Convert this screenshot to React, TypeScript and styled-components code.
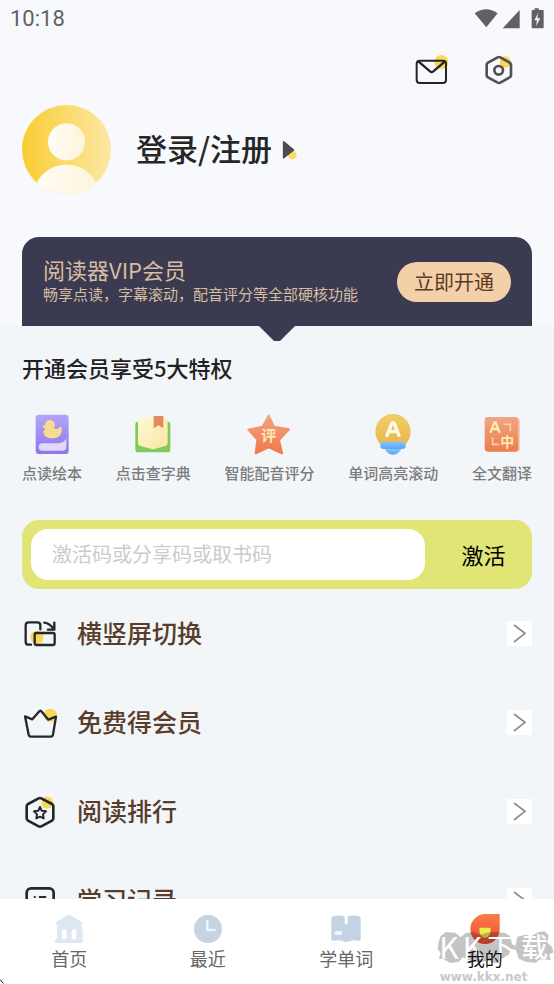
import React from "react";
import styled, { createGlobalStyle } from "styled-components";

const GlobalStyle = createGlobalStyle`
  *, *::before, *::after { box-sizing: border-box; }
  body {
    margin: 0;
    background: #f2f6f9;
    font-family: "Noto Sans CJK SC", "Noto Sans", sans-serif;
    color: #222;
  }
  h1, h2, p, ul { margin: 0; padding: 0; }
  button, input { font-family: inherit; border: 0; padding: 0; }
  button { cursor: pointer; background: none; color: inherit; }
  a { color: inherit; text-decoration: none; }
  svg { display: block; flex: none; }
`;

const Screen = styled.div`
  position: relative;
  display: flex;
  flex-direction: column;
  height: 100vh;
  overflow: hidden;
`;

const Scroller = styled.main`
  flex: 1;
  min-height: 0;
  overflow: hidden;
`;

const Hero = styled.header`
  background: #f7f9fd;
`;

const StatusBar = styled.div`
  display: flex;
  align-items: center;
  justify-content: space-between;
  height: 38px;
  padding: 0 10px 2px;
  font-family: Roboto, sans-serif;
  font-size: 22px;
  color: #616164;
`;

const Toolbar = styled.div`
  display: flex;
  align-items: center;
  justify-content: flex-end;
  gap: 36px;
  height: 67px;
  padding: 0 41px 4px 0;
`;

const IconButton = styled.button`
  display: flex;
`;

const Profile = styled.a`
  display: flex;
  align-items: center;
  padding: 0 22px 43px;
`;

const ProfileName = styled.h1`
  margin: 0 10px 0 25px;
  padding-bottom: 4px;
  font-size: 31px;
  line-height: 40px;
  font-weight: 500;
  color: #262626;
`;

const VipCard = styled.section`
  position: relative;
  display: flex;
  align-items: center;
  justify-content: space-between;
  min-height: 89px;
  margin: 0 22px;
  padding: 0 21px;
  border-radius: 17px 17px 0 0;
  background: #3a3b50;
  color: #d9bda2;
`;

const VipPointer = styled.svg`
  position: absolute;
  top: 100%;
  left: 50%;
  transform: translateX(-50%);
`;

const VipInfo = styled.div`
  padding-bottom: 3px;
`;

const VipTitle = styled.h2`
  font-size: 22px;
  line-height: 28px;
  font-weight: 400;
`;

const VipText = styled.p`
  font-size: 15px;
  line-height: 22px;
`;

const VipButton = styled.button`
  flex: none;
  width: 114px;
  height: 40px;
  border-radius: 20px;
  background: #f3d0a8;
  color: #5b3a28;
  font-size: 20px;
`;

const Benefits = styled.section`
  padding: 24px 22px 36px;
`;

const BenefitsTitle = styled.h2`
  font-size: 22px;
  line-height: 34px;
  font-weight: 500;
`;

const BenefitList = styled.ul`
  display: flex;
  justify-content: space-between;
  margin-top: 29px;
  list-style: none;
`;

const Benefit = styled.li`
  display: flex;
  flex-direction: column;
  align-items: center;
  gap: 7px;
  font-size: 15px;
  line-height: 22px;
  font-weight: 500;
  color: #7c7c7c;
`;

const CodeForm = styled.form`
  display: flex;
  margin: 0 22px;
  padding: 9px 0 9px 9px;
  border-radius: 17px;
  background: #e0e575;
`;

const CodeInput = styled.input`
  flex: 1;
  min-width: 0;
  height: 51px;
  padding: 0 21px 2px;
  border-radius: 17px;
  background: #fff;
  font-size: 20px;
  color: #333;
  &::placeholder { color: #cbcbcb; opacity: 1; }
`;

const CodeButton = styled.button`
  width: 107px;
  padding: 0 0 2px 10px;
  font-size: 22px;
  color: #000;
`;

const MenuRow = styled.a`
  display: flex;
  align-items: center;
  gap: 19px;
  height: 89px;
  padding: 0 22px;
  font-size: 25px;
  line-height: 34px;
  font-weight: 500;
  color: #5a3c2b;
`;

const MenuLabel = styled.span`
  flex: 1;
  padding-bottom: 4px;
`;

const ArrowBox = styled.span`
  background: #fff;
`;

const TabBar = styled.nav`
  display: grid;
  grid-template-columns: repeat(4, 1fr);
  padding: 15px 0 14px;
  background: #fff;
`;

const Tab = styled.a<{ $active?: boolean }>`
  display: flex;
  flex-direction: column;
  align-items: center;
  gap: 2px;
  font-size: 18px;
  line-height: 24px;
  color: ${(p) => (p.$active ? "#111" : "#666")};
`;

const TabLabel = styled.span`
  position: relative;
  z-index: 2;
`;

const Watermark = styled.svg`
  position: absolute;
  right: 0;
  bottom: 0;
  z-index: 1;
  pointer-events: none;
`;

const CornerMark = styled.svg`
  position: absolute;
  left: 0;
  bottom: 0;
`;

const cjk = '"Noto Sans CJK SC", sans-serif';
const yellow = "#f8d856";

const StatusIcons = () => (
  <svg width="70" height="22" viewBox="0 0 210 66" fill="#616164" aria-hidden="true">
    <path d="M2 19Q36-5 71 19L37 61Z" />
    <path d="M137 9V64H86Z" />
    <path d="M182 4h12v5h13q2 0 2 3v49q0 3-3 3h-30q-3 0-3-3V12q0-3 3-3h6Z" />
    <path d="M193 18L181 40h8l-3 17 13-23h-9Z" fill="#f7f9fd" />
  </svg>
);

const MailIcon = () => (
  <svg width="34" height="31" viewBox="0 0 102 93" fill="none" aria-hidden="true">
    <circle cx="79" cy="24" r="21" fill={yellow} />
    <rect x="5" y="20" width="88" height="67" rx="9" stroke="#242424" strokeWidth="6" />
    <path d="M10 22L45 52q5 4 10 0L90 22" stroke="#242424" strokeWidth="7" />
  </svg>
);

const SettingsIcon = () => (
  <svg width="28" height="30" viewBox="0 0 84 90" fill="none" aria-hidden="true">
    <circle cx="61" cy="21" r="17" fill={yellow} />
    <path d="M38 7q4-2 8 0l28 16q4 3 4 7v31q0 4-4 6L46 83q-4 2-8 0L9 67q-4-2-4-6V30q0-4 4-7Z" stroke="#505155" strokeWidth="8" />
    <circle cx="41" cy="46" r="13" stroke="#505155" strokeWidth="8" />
  </svg>
);

const Avatar = () => (
  <svg width="89" height="89" viewBox="0 0 268 268" aria-hidden="true">
    <defs>
      <linearGradient id="avatarBack"><stop stopColor="#f9cd33" /><stop offset="1" stopColor="#fbe8a4" /></linearGradient>
      <linearGradient id="avatarFront"><stop stopColor="#fffdf6" /><stop offset="1" stopColor="#fdf4da" /></linearGradient>
      <clipPath id="avatarClip"><circle cx="134" cy="134" r="134" /></clipPath>
    </defs>
    <circle cx="134" cy="134" r="134" fill="url(#avatarBack)" />
    <g clipPath="url(#avatarClip)" fill="url(#avatarFront)">
      <circle cx="134" cy="111" r="56" />
      <circle cx="134" cy="280" r="101" />
    </g>
  </svg>
);

const PlayIcon = () => (
  <svg width="16" height="20" viewBox="0 0 48 60" aria-hidden="true">
    <circle cx="31" cy="45" r="13" fill="#fcd968" />
    <path d="M5 6v47L34 30Z" fill="#4c4c4e" stroke="#4c4c4e" strokeWidth="5" strokeLinejoin="round" />
  </svg>
);

const BookIcon = () => (
  <svg width="42" height="42" viewBox="0 0 126 126" aria-hidden="true">
    <defs><linearGradient id="book" x2="0" y2="1"><stop stopColor="#b3a5f8" /><stop offset="1" stopColor="#8d77ec" /></linearGradient></defs>
    <rect x="14" y="5" width="99" height="118" rx="10" fill="url(#book)" />
    <path d="M34 42q2-5 8-6q0-14 14-15q15 1 16 15q-1 6-3 9q8 7 15 0q3-6 8-2q3 32-26 33q-26 1-29-18q0-6 6-10q-3-5-9-6Z" fill="#f6dc91" />
    <path d="M34 91h48q18-1 24-15v27q0 10-10 10H34a11 11 0 0 1 0-22Z" fill="#e1d8fa" />
  </svg>
);

const DictionaryIcon = () => (
  <svg width="42" height="42" viewBox="0 0 126 126" aria-hidden="true">
    <defs><linearGradient id="pages" x2="1" y2="1"><stop stopColor="#fff8d5" /><stop offset="1" stopColor="#fbe6a2" /></linearGradient></defs>
    <rect x="10" y="26" width="105" height="92" rx="8" fill="#7fca58" />
    <path d="M28 14h70q9 0 9 9v67q0 7-7 9l-33 9q-4 1-8 0L25 99q-7-2-7-9V23q0-9 10-9Z" fill="url(#pages)" />
    <path d="M65 9h29v37L79 37 65 46Z" fill="#e08a60" />
  </svg>
);

const StarIcon = () => (
  <svg width="44" height="42" viewBox="0 0 132 126" aria-hidden="true">
    <defs><linearGradient id="star" x2="0" y2="1"><stop stopColor="#f3a27e" /><stop offset="1" stopColor="#ef7a4c" /></linearGradient></defs>
    <path d="M65 8L81 41 126 49 96 81 105 121 65 103 26 121 31 80 4 50 47 41Z" fill="url(#star)" stroke="url(#star)" strokeWidth="6" strokeLinejoin="round" />
    <text x="65" y="84" textAnchor="middle" fontFamily={cjk} fontSize="45" fontWeight="700" fill="#fdeab6">评</text>
  </svg>
);

const BulbIcon = () => (
  <svg width="42" height="42" viewBox="0 0 126 126" aria-hidden="true">
    <defs>
      <linearGradient id="bulb" x2="0" y2="1"><stop stopColor="#efcd65" /><stop offset="1" stopColor="#ebb44b" /></linearGradient>
      <linearGradient id="bulbBase" x2="0" y2="1"><stop stopColor="#86c4fb" /><stop offset="1" stopColor="#5ba5f3" /></linearGradient>
    </defs>
    <circle cx="63" cy="56" r="53" fill="url(#bulb)" />
    <rect x="25" y="86" width="76" height="22" rx="9" fill="url(#bulbBase)" />
    <path d="M38 108h50q-9 17-25 17T38 108Z" fill="url(#bulbBase)" />
    <path d="M45 67L59 32q4-6 8 0L81 67M51 56h24" fill="none" stroke="#fffbe8" strokeWidth="10" strokeLinecap="round" />
  </svg>
);

const TranslateIcon = () => (
  <svg width="42" height="42" viewBox="0 0 126 126" aria-hidden="true">
    <defs><linearGradient id="translate" x2="0" y2="1"><stop stopColor="#f0a586" /><stop offset="1" stopColor="#ed7d4e" /></linearGradient></defs>
    <rect x="15" y="14" width="102" height="103" rx="10" fill="#f9cdb2" />
    <rect x="11" y="12" width="101" height="104" rx="10" fill="url(#translate)" />
    <path d="M29 57L40 28h4L55 57M32 48h20" fill="none" stroke="#fdeaad" strokeWidth="7" strokeLinecap="round" strokeLinejoin="round" />
    <path d="M68 34H88V55M35 73V94H54" fill="none" stroke="#fbcf9f" strokeWidth="5" />
    <text x="79" y="102" textAnchor="middle" fontFamily={cjk} fontSize="42" fontWeight="700" fill="#fdeaad">中</text>
  </svg>
);

const LineIcon = ({ children }: { children: React.ReactNode }) => (
  <svg width="36" height="36" viewBox="0 0 108 108" fill="none" stroke="#262728" strokeWidth="7" strokeLinecap="round" strokeLinejoin="round" aria-hidden="true">
    {children}
  </svg>
);

const RotateIcon = () => (
  <LineIcon>
    <circle cx="45" cy="64" r="20" fill={yellow} stroke="none" />
    <path d="M27 86h-7q-9 0-9-9V28q0-9 9-9h26q9 0 9 9v12" />
    <rect x="38" y="51" width="60" height="36" rx="5" />
    <path d="M67 20q16 2 27 18M97 20v21H78" />
  </LineIcon>
);

const CrownIcon = () => (
  <LineIcon>
    <circle cx="85" cy="31" r="20" fill={yellow} stroke="none" />
    <path d="M9 34L31 43 52 19q3-3 6 0L79 44 102 35 93 89q-1 6-7 6H27q-6 0-7-6Z" />
  </LineIcon>
);

const RankIcon = () => (
  <LineIcon>
    <circle cx="76" cy="26" r="18" fill={yellow} stroke="none" />
    <path strokeWidth="8" d="M50 13q4-2 8 0l32 17q4 3 4 7v36q0 4-4 7L58 97q-4 2-8 0L18 80q-4-3-4-7V37q0-4 4-7Z" />
    <path strokeWidth="6" d="M54 39l5 11 13 2-9 9 2 12-11-5-11 5 2-12-9-9 13-2Z" />
  </LineIcon>
);

const RecordIcon = () => (
  <LineIcon>
    <rect x="14" y="16" width="81" height="78" rx="13" strokeWidth="8" />
    <path d="M38 42h1M53 42h17M38 62h1M53 62h17" strokeWidth="6" />
  </LineIcon>
);

const HomeIcon = () => (
  <svg width="30" height="30" viewBox="0 0 90 90" fill="#dfe7f1" aria-hidden="true">
    <circle cx="80" cy="61" r="15" fill="#eff6fc" />
    <path d="M41 4q5-3 9 0l34 21q5 5-1 6v45q5 0 5 5t-5 6H7q-5 0-5-5t7-6V31q-9-1-4-6Z" />
    <path d="M24 76V53a7 7 0 0 1 14 0v23ZM53 76V53a7 7 0 0 1 14 0v23Z" fill="#fff" />
  </svg>
);

const ClockIcon = () => (
  <svg width="30" height="30" viewBox="0 0 90 90" aria-hidden="true">
    <circle cx="45" cy="45" r="42" fill="#c5d3e3" />
    <path d="M43 22v26h22" fill="none" stroke="#eef5fb" strokeWidth="8" strokeLinecap="round" strokeLinejoin="round" />
  </svg>
);

const WordsIcon = () => (
  <svg width="30" height="30" viewBox="0 0 90 90" aria-hidden="true">
    <path d="M7 7q17-4 30-1q4 0 4 5v17q4 7 9 0V11q0-5 5-5q15-3 29 1q5 1 5 6v63q0 6-6 4q-14-3-28 2q-9 5-18 0q-14-5-30-2q-6 1-6-4V13q0-5 6-6Z" fill="#c4d3e4" />
    <rect x="11" y="51" width="22" height="12" rx="4" fill="#eef6fd" />
  </svg>
);

const MineIcon = () => (
  <svg width="30" height="30" viewBox="0 0 90 90" aria-hidden="true">
    <defs><linearGradient id="mine" x2="0" y2="1"><stop stopColor="#fb7b48" /><stop offset="1" stopColor="#ed4f36" /></linearGradient></defs>
    <path d="M45 0H89V46A44 44 0 0 1 1 46A45 45 0 0 1 45 0Z" fill="url(#mine)" />
    <path d="M31 41h27q4 0 4 4q0 26-17 26T28 45q0-4 3-4Z" fill="#efee4f" />
  </svg>
);

const benefits = [
  { label: "点读绘本", Icon: BookIcon },
  { label: "点击查字典", Icon: DictionaryIcon },
  { label: "智能配音评分", Icon: StarIcon },
  { label: "单词高亮滚动", Icon: BulbIcon },
  { label: "全文翻译", Icon: TranslateIcon },
];

const menu = [
  { label: "横竖屏切换", Icon: RotateIcon },
  { label: "免费得会员", Icon: CrownIcon },
  { label: "阅读排行", Icon: RankIcon },
  { label: "学习记录", Icon: RecordIcon },
];

const tabs = [
  { label: "首页", Icon: HomeIcon },
  { label: "最近", Icon: ClockIcon },
  { label: "学单词", Icon: WordsIcon },
  { label: "我的", Icon: MineIcon, active: true },
];

export default function App() {
  return (
    <Screen>
      <GlobalStyle />
      <Scroller>
        <Hero>
          <StatusBar>
            <span>10:18</span>
            <StatusIcons />
          </StatusBar>
          <Toolbar>
            <IconButton aria-label="消息"><MailIcon /></IconButton>
            <IconButton aria-label="设置"><SettingsIcon /></IconButton>
          </Toolbar>
          <Profile href="#login">
            <Avatar />
            <ProfileName>登录/注册</ProfileName>
            <PlayIcon />
          </Profile>
          <VipCard>
            <VipInfo>
              <VipTitle>阅读器VIP会员</VipTitle>
              <VipText>畅享点读，字幕滚动，配音评分等全部硬核功能</VipText>
            </VipInfo>
            <VipButton>立即开通</VipButton>
            <VipPointer width="36" height="16" viewBox="0 0 36 16" aria-hidden="true">
              <path d="M0 0H36L21 15H15Z" fill="#3a3b50" />
            </VipPointer>
          </VipCard>
        </Hero>
        <Benefits>
          <BenefitsTitle>开通会员享受5大特权</BenefitsTitle>
          <BenefitList>
            {benefits.map(({ label, Icon }) => (
              <Benefit key={label}>
                <Icon />
                <span>{label}</span>
              </Benefit>
            ))}
          </BenefitList>
        </Benefits>
        <CodeForm onSubmit={(e) => e.preventDefault()}>
          <CodeInput type="text" aria-label="激活码" placeholder="激活码或分享码或取书码" />
          <CodeButton type="submit">激活</CodeButton>
        </CodeForm>
        {menu.map(({ label, Icon }) => (
          <MenuRow key={label} href="#menu">
            <Icon />
            <MenuLabel>{label}</MenuLabel>
            <ArrowBox>
              <svg width="25" height="25" viewBox="0 0 75 75" fill="none" aria-hidden="true">
                <path d="M21 12L54 37 21 63" stroke="#8c8c8c" strokeWidth="5" />
              </svg>
            </ArrowBox>
          </MenuRow>
        ))}
      </Scroller>
      <TabBar>
        {tabs.map(({ label, Icon, active }) => (
          <Tab key={label} href="#tab" $active={active} aria-current={active ? "page" : undefined}>
            <Icon />
            <TabLabel>{label}</TabLabel>
          </Tab>
        ))}
      </TabBar>
      <Watermark width="124" height="84" viewBox="0 0 372 252">
        <path
          d="M32 108L48 96 76 98 92 112 108 99 130 96 150 104 176 97 200 96 226 99 240 108 246 132 256 138 262 110 286 104 304 108 326 96 344 94 356 106 352 128 366 140 371 156 358 164 362 180 330 178 316 188 290 186 266 176 258 150 244 146 236 164 216 176 196 190 172 182 146 188 120 182 98 172 86 186 62 189 40 178 26 176 32 160 23 146 26 126Z"
          fill="#000"
          opacity="0.23"
        />
        <g fill="#fff" fontFamily={cjk}>
          <text x="28" y="176" fontSize="90">K</text>
          <text x="98" y="176" fontSize="90">K</text>
          <text x="172" y="174" fontSize="82">下</text>
          <text x="274" y="172" fontSize="80" fontWeight="500">载</text>
        </g>
        <text x="29" y="244" fontFamily='"DejaVu Sans", sans-serif' fontSize="36" fontWeight="700" fill="#c9c9c9">www.kkx.net</text>
      </Watermark>
      <CornerMark width="4" height="5" viewBox="0 0 4 5" aria-hidden="true">
        <path d="M0 0.5L3.5 4.5" stroke="#111" />
      </CornerMark>
    </Screen>
  );
}
